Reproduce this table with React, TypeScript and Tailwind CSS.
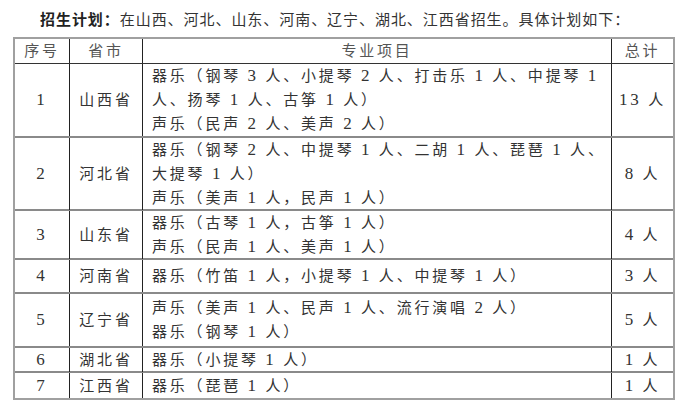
import React from "react";

type Row = { n: string; p: string; lines: string[]; t: string; h: string };

const rows: Row[] = [
	{
		n: "1",
		p: "山西省",
		lines: ["器乐（钢琴 3 人、小提琴 2 人、打击乐 1 人、中提琴 1", "人、扬琴 1 人、古筝 1 人）", "声乐（民声 2 人、美声 2 人）"],
		t: "13 人",
		h: "h-[74px]",
	},
	{
		n: "2",
		p: "河北省",
		lines: ["器乐（钢琴 2 人、中提琴 1 人、二胡 1 人、琵琶 1 人、", "大提琴 1 人）", "声乐（美声 1 人，民声 1 人）"],
		t: "8 人",
		h: "h-[73px]",
	},
	{
		n: "3",
		p: "山东省",
		lines: ["器乐（古琴 1 人，古筝 1 人）", "声乐（民声 1 人、美声 1 人）"],
		t: "4 人",
		h: "h-[49px]",
	},
	{ n: "4", p: "河南省", lines: ["器乐（竹笛 1 人，小提琴 1 人、中提琴 1 人）"], t: "3 人", h: "h-[34px]" },
	{
		n: "5",
		p: "辽宁省",
		lines: ["声乐（美声 1 人、民声 1 人、流行演唱 2 人）", "器乐（钢琴 1 人）"],
		t: "5 人",
		h: "h-[54px]",
	},
	{ n: "6", p: "湖北省", lines: ["器乐（小提琴 1 人）"], t: "1 人", h: "h-[25px]" },
	{ n: "7", p: "江西省", lines: ["器乐（琵琶 1 人）"], t: "1 人", h: "h-[25px]" },
];

const cols = "grid grid-cols-[55px_73px_469px_1fr]";

// digits are set a little larger, like the serif numerals in the original
const Txt = ({ s }: { s: string }) => (
	<span>
		{s.split(/(\d+)/).map((part, i) =>
			/^\d+$/.test(part) ? (
				<span key={i} className="text-[17px]">
					{part}
				</span>
			) : (
				<React.Fragment key={i}>{part}</React.Fragment>
			),
		)}
	</span>
);

const App = () => {
	return (
		<div className="w-[686px] h-[404px] bg-white overflow-hidden">
			<div className="pl-[40px] pt-[10px] pb-[7px] text-[15px] leading-[20px] tracking-[0.95px] text-[#333] font-['Liberation_Sans','Noto_Sans_CJK_SC',sans-serif]">
				<span className="font-bold text-[#222]">招生计划：</span>
				在山西、河北、山东、河南、辽宁、湖北、江西省招生。具体计划如下：
			</div>

			<div className="ml-[13px] w-[662px] border-2 border-[#a0a0a0] text-[15px] leading-[24px] tracking-[2.8px] text-[#333] font-['Liberation_Serif','Noto_Sans_CJK_SC',serif]">
				<div className={`${cols} h-[25px] border-b border-[#333] text-[#555]`}>
					<div className="flex items-center justify-center border-r border-[#222]">序号</div>
					<div className="flex items-center justify-center border-r border-[#222]">省市</div>
					<div className="flex items-center justify-center border-r border-[#222]">专业项目</div>
					<div className="flex items-center justify-center">总计</div>
				</div>

				{rows.map((r, i) => (
					<div
						key={r.n}
						className={`${cols} ${r.h} ${i < rows.length - 1 ? "border-b-2 border-[#8a8a8a]" : ""}`}
					>
						<div className="flex items-center justify-center border-r border-[#222]">
							<Txt s={r.n} />
						</div>
						<div className="flex items-center justify-center border-r border-[#222]">{r.p}</div>
						<div className="flex flex-col justify-center pl-[9px] border-r border-[#222] whitespace-nowrap">
							{r.lines.map((l) => (
								<div key={l}>
									<Txt s={l} />
								</div>
							))}
						</div>
						<div className="flex items-center justify-center">
							<Txt s={r.t} />
						</div>
					</div>
				))}
			</div>
		</div>
	);
};

export default App;
